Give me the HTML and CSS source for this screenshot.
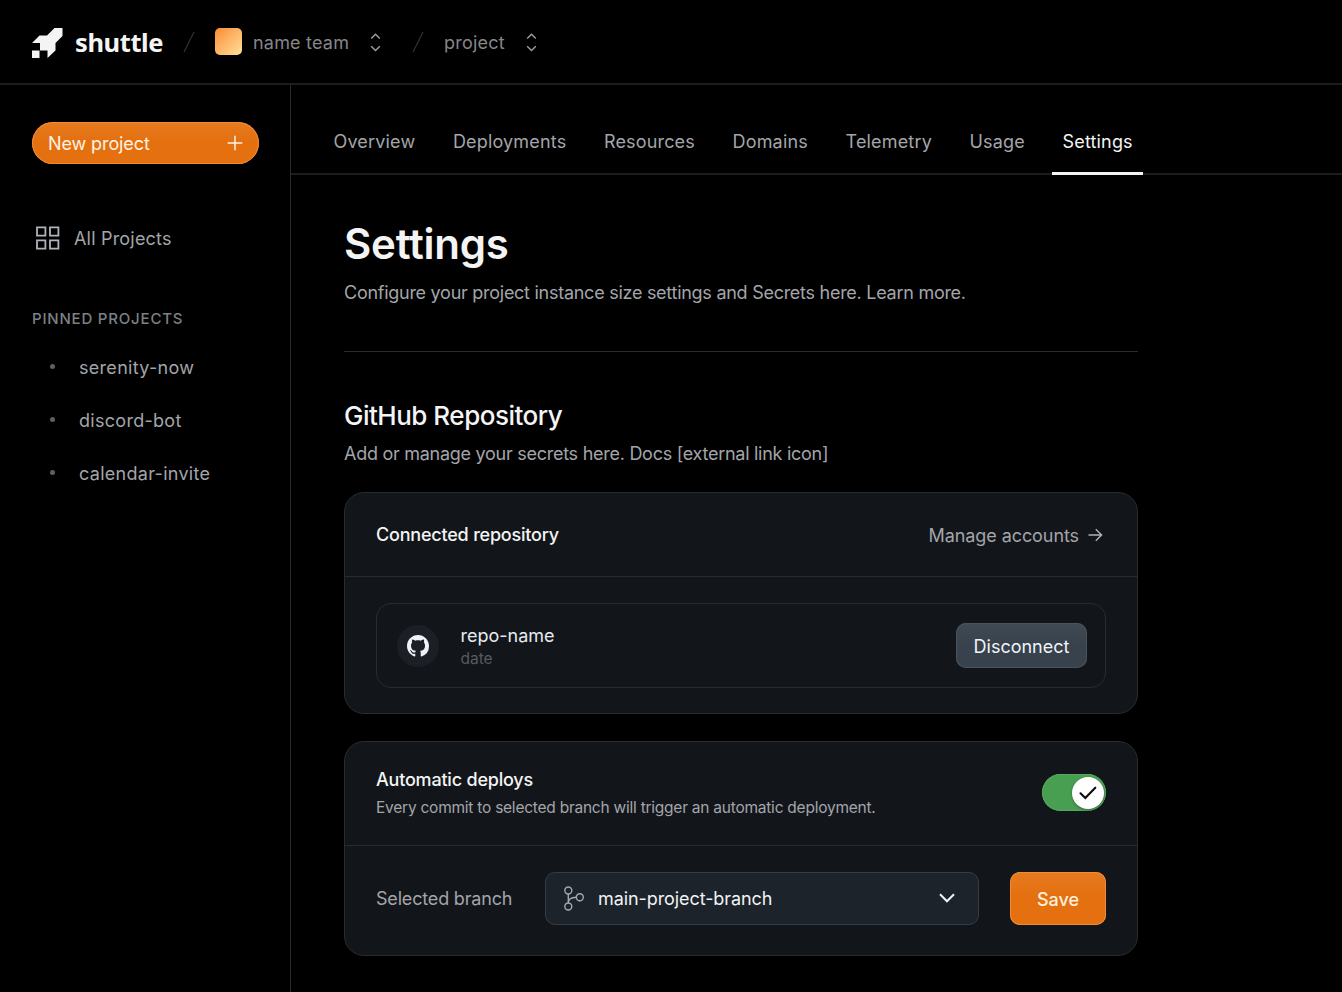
FILE: index.html
```html
<!DOCTYPE html>
<html lang="en">
<head>
<meta charset="utf-8">
<title>Settings – shuttle</title>
<link rel="stylesheet" href="styles.css">
</head>
<body>
<header class="topbar">
  <svg class="logo-mark" width="32" height="32" viewBox="0 0 32 32" fill="#f4f4f4"><path d="M0 15 7.500 7.500H15L22.500 0H30.500V8L23.500 15V22.500L15.500 30V22.500H8V15ZM0 22.500H7.500V30H0Z"/></svg>
  <span class="wordmark">shuttle</span>
  <svg class="slash slash-a" width="12" height="22" viewBox="0 0 12 22" stroke="#303030" stroke-width="1.300"><path d="M1 21 11 1"/></svg>
  <span class="avatar"></span>
  <span class="crumb team">name team</span>
  <svg class="updown" width="11" height="19" viewBox="0 0 11 19" fill="none" stroke="#a0a0a0" stroke-width="1.400"><path d="M1.200 5.500 5.500 1.200 9.800 5.500M1.200 13.300 5.500 17.600 9.800 13.300"/></svg>
  <svg class="slash slash-b" width="12" height="22" viewBox="0 0 12 22" stroke="#303030" stroke-width="1.300"><path d="M1 21 11 1"/></svg>
  <span class="crumb proj">project</span>
  <svg class="updown" width="11" height="19" viewBox="0 0 11 19" fill="none" stroke="#a0a0a0" stroke-width="1.400"><path d="M1.200 5.500 5.500 1.200 9.800 5.500M1.200 13.300 5.500 17.600 9.800 13.300"/></svg>
</header>
<div class="shell">
  <aside class="sidebar">
    <button class="new-project"><span>New project</span>
      <svg width="16" height="16" viewBox="0 0 16 16" fill="none" stroke="#fff3e4" stroke-width="1.500"><path d="M8 .7V15.300M.7 8H15.300"/></svg>
    </button>
    <a class="all-projects">
      <svg width="24" height="24" viewBox="0 0 24 24" fill="none" stroke="#b0b3bb" stroke-width="1.800"><path d="M1 1.300H9.400V9.700H1ZM14 1.300H22.400V9.700H14ZM1 14.300H9.400V22.700H1ZM14 14.300H22.400V22.700H14Z"/></svg>
      <span>All Projects</span>
    </a>
    <h3 class="pinned-title">PINNED PROJECTS</h3>
    <ul class="pinned">
      <li><span>serenity-now</span></li>
      <li><span>discord-bot</span></li>
      <li><span>calendar-invite</span></li>
    </ul>
  </aside>
  <main class="main">
    <nav class="tabs">
      <a>Overview</a>
      <a>Deployments</a>
      <a>Resources</a>
      <a>Domains</a>
      <a>Telemetry</a>
      <a>Usage</a>
      <a class="active">Settings</a>
    </nav>
    <div class="content">
      <h1>Settings</h1>
      <p class="lead">Configure your project instance size settings and Secrets here. Learn more.</p>
      <hr>
      <h2>GitHub Repository</h2>
      <p class="sub">Add or manage your secrets here. Docs [external link icon]</p>
      <section class="card repo-card">
        <div class="card-head">
          <span class="card-title">Connected repository</span>
          <a class="manage"><span>Manage accounts</span>
            <svg width="15" height="14" viewBox="0 0 15 14" fill="none" stroke="#aeb1b8" stroke-width="1.400"><path d="M.5 7H13.500M7.800 1.200 13.600 7 7.800 12.800"/></svg>
          </a>
        </div>
        <div class="repo">
          <span class="gh"><svg width="22" height="22" viewBox="0 0 16 16" fill="#eef3fa"><path d="M8 0C3.580 0 0 3.580 0 8c0 3.540 2.290 6.530 5.470 7.590.4.070.55-.17.55-.38 0-.19-.01-.82-.01-1.490-2.010.37-2.530-.49-2.690-.94-.09-.23-.48-.94-.82-1.130-.28-.15-.68-.52-.01-.53.63-.01 1.080.58 1.230.82.72 1.210 1.870.87 2.330.66.07-.52.28-.87.51-1.070-1.780-.2-3.640-.89-3.640-3.950 0-.87.31-1.590.82-2.150-.08-.2-.36-1.020.08-2.120 0 0 .67-.21 2.200.82.64-.18 1.320-.27 2-.27s1.360.09 2 .27c1.530-1.040 2.200-.82 2.200-.82.44 1.100.16 1.920.08 2.120.51.56.82 1.270.82 2.150 0 3.070-1.870 3.750-3.650 3.950.29.25.54.73.54 1.480 0 1.070-.01 1.930-.01 2.200 0 .21.15.46.55.38A8.010 8.010 0 0 0 16 8c0-4.420-3.580-8-8-8Z"/></svg></span>
          <div class="repo-text"><span class="repo-name">repo-name</span><span class="repo-date">date</span></div>
          <button class="disconnect"><span>Disconnect</span></button>
        </div>
      </section>
      <section class="card deploy-card">
        <div class="card-head deploy-head">
          <div class="deploy-text"><span class="card-title">Automatic deploys</span><span class="hint">Every commit to selected branch will trigger an automatic deployment.</span></div>
          <span class="toggle"><span class="knob"><svg width="18" height="14" viewBox="0 0 18 14" fill="none" stroke="#0b0d10" stroke-width="2.100" stroke-linecap="round"><path d="M1.500 7.300 6.300 12 16.300 1.700"/></svg></span></span>
        </div>
        <div class="branch-row">
          <span class="branch-label">Selected branch</span>
          <div class="select">
            <svg width="22" height="26" viewBox="0 0 22 26" fill="none" stroke="#a3a9b2" stroke-width="1.400"><circle cx="5.300" cy="4.500" r="3.500"/><circle cx="5.300" cy="20.500" r="3.500"/><circle cx="16.800" cy="11.300" r="3.500"/><path d="M5.300 8V17M5.300 16.500C5.300 13 8 11.500 13.300 11.300"/></svg>
            <span class="branch-name">main-project-branch</span>
            <svg class="chev" width="16" height="10" viewBox="0 0 16 10" fill="none" stroke="#f0f2f5" stroke-width="2"><path d="M1 1.200 8 8.300 15 1.200"/></svg>
          </div>
          <button class="save"><span>Save</span></button>
        </div>
      </section>
    </div>
  </main>
</div>
</body>
</html>
```
FILE: styles.css
```css
* { box-sizing: border-box; }
body { margin: 0; height: 992px; overflow: hidden; background: #000; color: #a3a5aa; font: 400 18px/24px Inter, "Liberation Sans", sans-serif; display: flex; flex-direction: column; }
h1, h2, h3, p, ul { margin: 0; padding: 0; }
a, span, h1, h2, h3, p { white-space: nowrap; }
svg { flex: none; display: block; }
button { font: inherit; border: 0; }

.topbar { height: 85px; flex: none; display: flex; align-items: center; padding: 1px 0 0 32px; border-bottom: 2px solid #1d1d1d; }
.logo-mark { margin-top: 3px; }
.wordmark { width: 88px; margin-left: 11px; font: 700 25.500px/32px "Noto Sans", sans-serif; letter-spacing: -.4px; color: #f4f4f4; }
.slash-a { margin-left: 20px; }
.avatar { width: 27px; height: 27px; margin: -1px 0 0 20px; border-radius: 5px; background: linear-gradient(135deg, #fb8a35, #fdb768 50%, #ffe09a); }
.crumb { padding-top: 1px; letter-spacing: .2px; color: #85868a; }
.team { width: 96px; margin-left: 11px; }
.updown { margin-left: 21px; }
.slash-b { margin-left: 31px; }
.proj { width: 61px; margin-left: 20px; }

.shell { flex: 1; display: flex; }
.sidebar { width: 291px; flex: none; border-right: 1px solid #2a2a2a; padding: 37px 31px 0 32px; }
.new-project { display: flex; align-items: center; justify-content: space-between; width: 227px; height: 42px; padding: 2px 16px 0; border-radius: 21px; letter-spacing: -.1px; color: #fff3e4; background: linear-gradient(#e67b20, #e47010 45%); box-shadow: inset 0 0 0 1px #f08b38; }
.new-project svg { margin-top: -2px; }
.all-projects { display: flex; align-items: center; gap: 14px; margin: 62px 0 0 4px; letter-spacing: .2px; }
.all-projects span { padding-top: 1px; margin-bottom: -1px; }
.pinned-title { margin-top: 57px; font-size: 15px; font-weight: 500; line-height: 24px; letter-spacing: .8px; color: #7d8085; }
.pinned { list-style: none; margin-top: 25px; display: grid; row-gap: 29px; letter-spacing: .29px; }
.pinned li { display: flex; align-items: center; padding-left: 18px; gap: 24px; }
.pinned li::before { content: ""; width: 5px; height: 5px; margin-top: -3px; border-radius: 50%; background: #5d5f66; }

.main { flex: 1; }
.tabs { height: 90px; display: flex; align-items: flex-end; padding-left: 32px; gap: 16.600px; letter-spacing: .17px; border-bottom: 2px solid #1d1d1d; }
.tabs a { height: 45px; padding: 0 10.500px; margin-bottom: -2px; border-bottom: 3px solid transparent; }
.tabs .active { color: #f4f4f4; border-color: #f4f0f4; }
.content { width: 794px; margin-left: 53px; }
h1 { padding-top: 43px; font-size: 42px; line-height: 52px; font-weight: 600; letter-spacing: -.25px; color: #f4f4f4; }
.lead { margin-top: 11px; letter-spacing: -.27px; }
hr { margin: 46px 0 0; border: 0; height: 1px; background: #292a2b; }
h2 { margin-top: 48px; font-size: 26px; line-height: 32px; font-weight: 500; letter-spacing: -.5px; color: #f4f4f4; }
.sub { margin-top: 10px; letter-spacing: -.27px; }

.card { border: 1px solid #272c2f; border-radius: 20px; background: #12161a; }
.repo-card { margin-top: 26px; height: 222px; }
.card-head { height: 84px; padding: 0 31px; display: flex; align-items: center; justify-content: space-between; border-bottom: 1px solid #272c2f; }
.card-title { font-weight: 500; letter-spacing: -.2px; color: #f4f4f4; }
.manage { display: flex; align-items: center; gap: 9px; padding-right: 3px; letter-spacing: -.08px; }
.manage span { padding-top: 1px; margin-bottom: -1px; }
.repo { margin: 26px 31px 0; height: 85px; padding: 0 18px 0 20px; border: 1px solid #272c2f; border-radius: 15px; display: flex; align-items: center; }
.gh { width: 42px; height: 42px; border-radius: 50%; background: #1c2026; display: grid; place-items: center; }
.repo-text { flex: 1; margin: 2px 0 0 21.500px; display: flex; flex-direction: column; }
.repo-name { color: #e8eaed; }
.repo-date { font-size: 15.500px; line-height: 22px; color: #555b64; }
.disconnect { width: 131px; height: 45px; padding: 2px 0 0; border-radius: 10px; color: #f1f4f8; background: linear-gradient(#404a54, #38424c 50%); box-shadow: inset 0 0 0 1px #4a535c; }

.deploy-card { margin-top: 27px; height: 215px; }
.deploy-head { height: 104px; }
.deploy-text { display: flex; flex-direction: column; padding-top: 1px; }
.hint { margin-top: 4px; font-size: 15.500px; letter-spacing: -.24px; }
.toggle { width: 64px; height: 37px; margin-top: -2px; border-radius: 19px; padding: 2.500px 2px; background: #489f51; box-shadow: inset 0 0 0 1px #5aa561; display: flex; justify-content: flex-end; }
.knob { width: 32px; height: 32px; border-radius: 50%; background: #fff; box-shadow: 0 1px 3px #0005; display: grid; place-items: center; }
.branch-row { display: flex; align-items: center; padding: 26px 31px 0; }
.branch-label { width: 169px; padding-top: 1px; letter-spacing: -.18px; }
.select { width: 434px; height: 53px; padding: 0 23px 0 17px; border: 1px solid #343c44; border-radius: 10px; background: #1d232a; display: flex; align-items: center; gap: 13px; color: #f1f3f5; }
.branch-name { flex: 1; letter-spacing: -.08px; }
.chev { margin-top: -2px; }
.save { width: 96px; height: 53px; margin-left: auto; padding: 2px 0 0; border-radius: 10px; font-weight: 500; color: #fff0dd; background: linear-gradient(#e67b20, #e47010 45%); box-shadow: inset 0 0 0 1px #f08b38; }
```
